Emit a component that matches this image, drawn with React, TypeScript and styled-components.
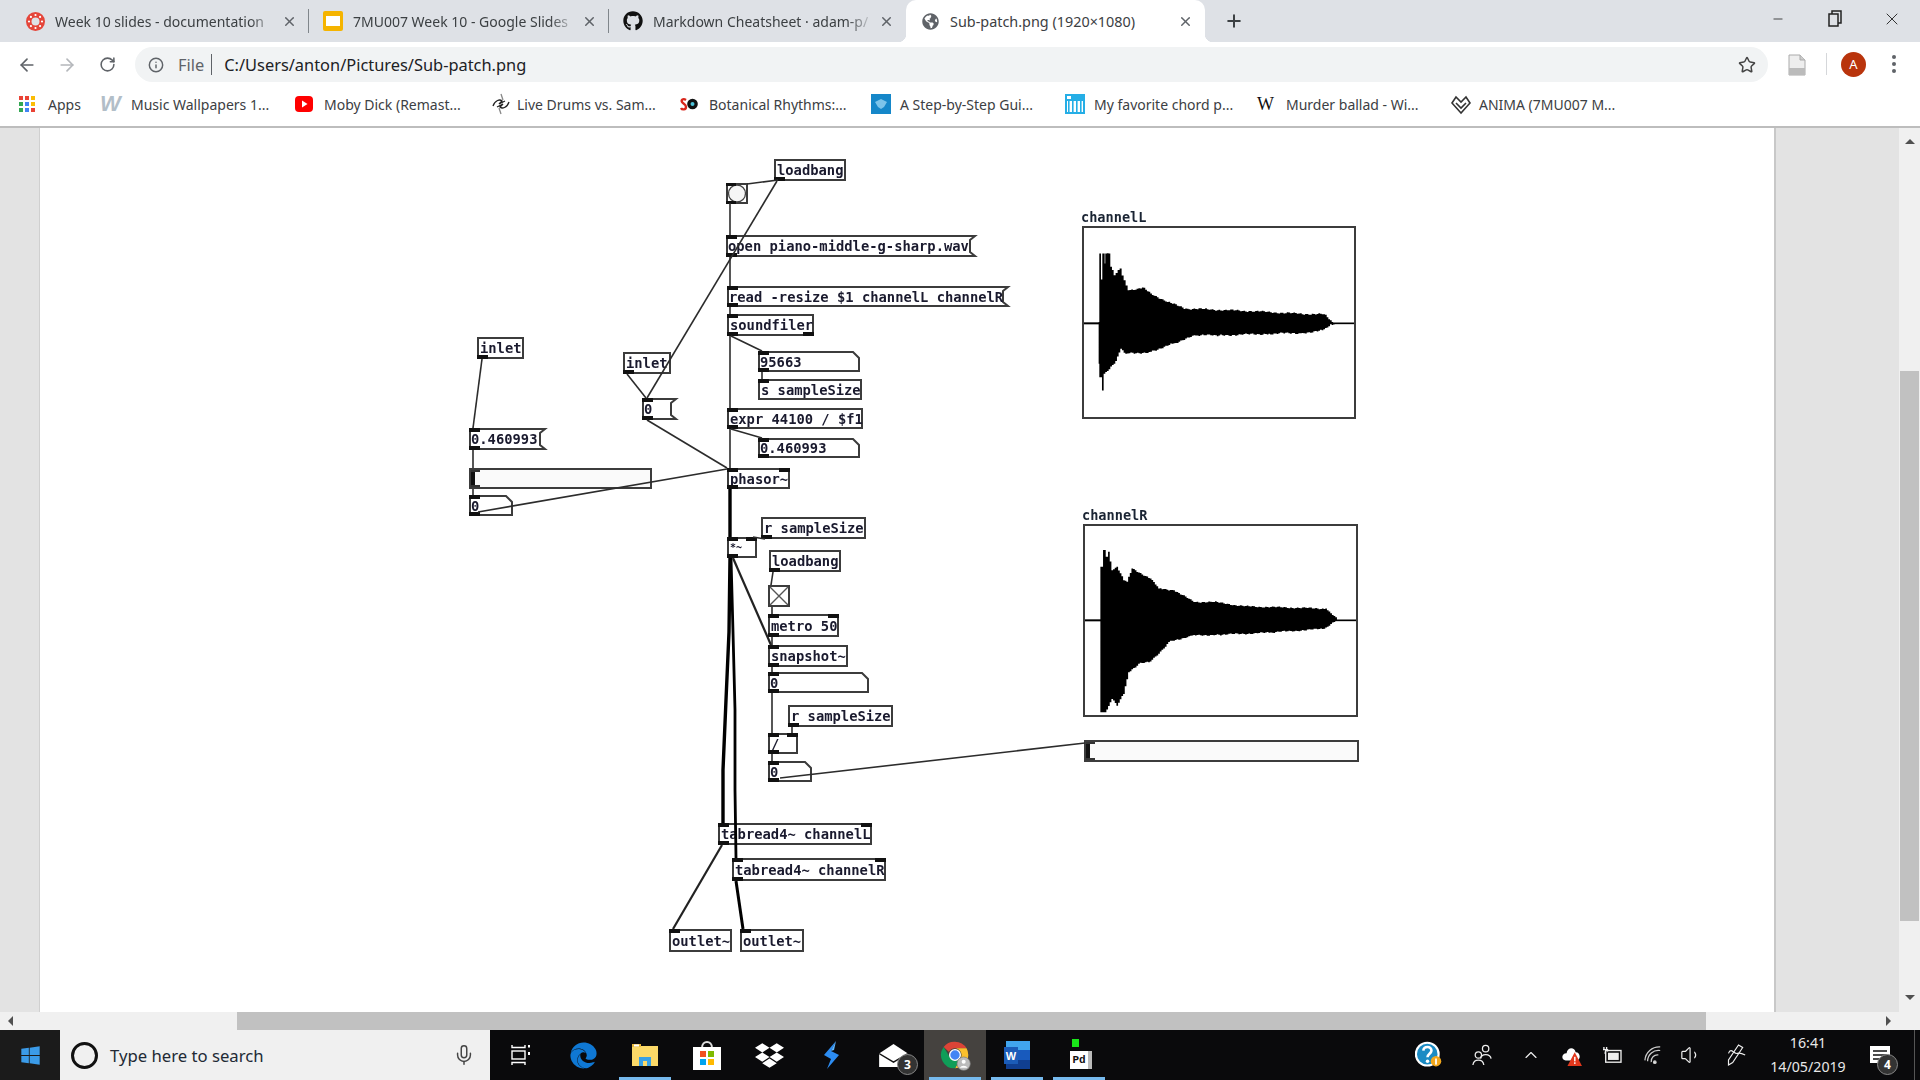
import React from "react";
import styled, { createGlobalStyle } from "styled-components";
import { ArrowLeft, ArrowRight, RotateCw, Info, Star, X, Plus, Minus, Mic, ChevronUp, Volume1 } from "lucide-react";
import { FaGithub, FaGlobeAmericas, FaEdge, FaDropbox, FaWindows } from "react-icons/fa";

const UI = `"Noto Sans", "Open Sans", Arial, sans-serif`;
const MONO = `"DejaVu Sans Mono", "Liberation Mono", monospace`;

const Global = createGlobalStyle`
  html, body { margin: 0; padding: 0; width: 1920px; height: 1080px; overflow: hidden; background: #fff; }
  #root { width: 1920px; height: 1080px; }
  * { box-sizing: border-box; }
  svg { flex: none; }
`;

const Page = styled.div`
  width: 1920px; height: 1080px; display: flex; flex-direction: column; font-family: ${UI}; color: #3c4043;
`;

/* ---------- tab strip ---------- */
const TabStrip = styled.div`
  height: 42px; flex: none; background: #dee1e6; display: flex; padding-left: 11px; align-items: stretch;
`;
const Tab = styled.div<{ $w: number; $active?: boolean; $sep?: boolean }>`
  position: relative; width: ${p => p.$w}px; flex: none; display: flex; align-items: center; gap: 12px;
  padding: 0 12px 0 16px; font-size: ${p => (p.$active ? 14.4 : 14)}px; color: #3c4043;
  background: ${p => (p.$active ? "#fff" : "transparent")};
  border-radius: ${p => (p.$active ? "10px 10px 0 0" : "0")};
  ${p => p.$sep && `&::after { content: ""; position: absolute; right: 0; top: 9px; height: 24px; width: 1px; background: #80868b; }`}
  ${p => p.$active && `
    &::before { content: ""; position: absolute; left: -8px; bottom: 0; width: 8px; height: 8px;
      background: radial-gradient(circle at 0 0, transparent 8px, #fff 8.5px); }
  `}
`;
const TabEnd = styled.span`
  position: absolute; right: -8px; bottom: 0; width: 8px; height: 8px;
  background: radial-gradient(circle at 100% 0, transparent 8px, #fff 8.5px);
`;
const TabIcon = styled.span`
  width: 16px; height: 20px; flex: none; display: flex; align-items: center; justify-content: center;
`;
const TabTitle = styled.span<{ $fade?: boolean }>`
  flex: 1; min-width: 0; white-space: nowrap; overflow: hidden; margin-right: -7px;
  ${p => p.$fade && `mask-image: linear-gradient(to right, #000 88%, transparent 100%);`}
`;
const NewTab = styled.span`
  width: 58px; display: flex; align-items: center; justify-content: center; color: #3c4043;
`;
const WindowControls = styled.div`
  margin-left: auto; display: flex; align-items: flex-start; padding-top: 8px; color: #222;
`;
const WinButton = styled.span`
  width: 57px; height: 22px; display: flex; align-items: center; justify-content: center;
`;

/* ---------- toolbar ---------- */
const Toolbar = styled.div`
  height: 44px; flex: none; background: #fff; display: flex; align-items: center; padding: 0 0 0 7px;
`;
const NavButton = styled.span<{ $off?: boolean; $w?: number }>`
  width: ${p => p.$w ?? 40}px; flex: none; display: flex; justify-content: center; align-items: center; padding-top: 1px;
  color: ${p => (p.$off ? "#b4b7bb" : "#5f6368")};
`;
const Omnibox = styled.div`
  width: 1633px; height: 35px; margin: 1px 0 0 8px; flex: none; background: #f1f3f4; border-radius: 18px;
  display: flex; align-items: center; padding: 0 12px 0 13px; font-size: 16.4px; color: #202124;
`;
const FileChip = styled.span`
  color: #5f6368; margin-left: 14px; padding-right: 7px; border-right: 1px solid #5f6368; line-height: 21px;
`;
const Url = styled.span`
  margin-left: 12px; flex: 1; white-space: nowrap;
`;
const ToolDivider = styled.span`
  width: 1px; height: 22px; background: #d5d7da; flex: none; margin-right: 14px;
`;
const Avatar = styled.span`
  width: 25px; height: 25px; border-radius: 50%; background: #b9340c; color: #fff; flex: none;
  font-size: 13px; display: flex; align-items: center; justify-content: center; margin-right: 26px;
`;
const Kebab = styled.span`
  width: 4px; height: 4px; border-radius: 50%; background: #5f6368; box-shadow: 0 -7px 0 #5f6368, 0 7px 0 #5f6368; flex: none;
`;

/* ---------- bookmarks ---------- */
const Bookmarks = styled.div`
  height: 42px; flex: none; background: #fff; border-bottom: 2px solid #bdbdbd; display: flex; align-items: center;
  padding: 0 0 4px 18px; font-size: 14px; color: #3c4043;
`;
const Bookmark = styled.div<{ $w: number }>`
  width: ${p => p.$w}px; flex: none; display: flex; align-items: center; white-space: nowrap;
`;
const BookmarkIcon = styled.span<{ $slot?: number }>`
  width: ${p => p.$slot ?? 30}px; flex: none; display: flex; align-items: center; padding-left: 1px;
`;
const SerifMark = styled.span`
  font-family: "Liberation Serif", serif; font-size: 18px; color: #111; line-height: 1;
`;
const ItalicMark = styled.span`
  font-family: "Liberation Sans", sans-serif; font-style: italic; font-weight: 700; font-size: 22px; color: #b2bec8; line-height: 1;
`;

/* ---------- viewer ---------- */
const Viewer = styled.div`
  flex: 1; min-height: 0; display: flex; background: #e3e3e3;
`;
const LeftGutter = styled.div`
  width: 40px; flex: none; background: #e3e3e3; border-right: 1px solid #d0d0d0;
`;
const PatchCanvas = styled.div`
  position: relative; width: 1734px; flex: none; background: #fff; overflow: hidden;
`;
const Blurred = styled.div`
  position: absolute; inset: 0; filter: blur(0.45px);
`;
const RightGutter = styled.div`
  flex: 1; background: #e3e3e3; border-left: 2px solid #c8c8c8;
`;
const VTrack = styled.div`
  width: 21px; flex: none; background: #f0f0f0; display: flex; flex-direction: column; align-items: center; padding-top: 11px;
`;
const VThumb = styled.div`
  width: 19px; height: 550px; background: #c1c1c1; margin-top: 227px; flex: none;
`;
const Tri = styled.span<{ $dir: "up" | "down" | "left" | "right" }>`
  width: 0; height: 0; flex: none; border: 5px solid transparent;
  ${p => p.$dir === "up" && `border-bottom: 5px solid #505050; border-top-width: 0;`}
  ${p => p.$dir === "down" && `border-top: 5px solid #505050; border-bottom-width: 0;`}
  ${p => p.$dir === "left" && `border-right: 5px solid #505050; border-left-width: 0;`}
  ${p => p.$dir === "right" && `border-left: 5px solid #505050; border-right-width: 0;`}
`;
const VDown = styled(Tri)`
  margin-top: 74px;
`;
const HTrack = styled.div`
  height: 18px; flex: none; background: #f0f0f0; display: flex; align-items: center; padding-left: 8px;
`;
const HThumb = styled.div`
  width: 1469px; height: 18px; background: #c1c1c1; margin-left: 224px; flex: none;
`;
const HRight = styled(Tri)`
  margin-left: 180px;
`;

/* ---------- pure data patch ---------- */
const OX = 40;
const OY = 128;
type Kind = "obj" | "msg" | "num";
const Node = styled.div<{ $x: number; $y: number; $w: number; $h: number; $kind: Kind }>`
  position: absolute; left: ${p => p.$x - OX}px; top: ${p => p.$y - OY}px; width: ${p => p.$w}px; height: ${p => p.$h}px;
  background: #fff; border: ${p => (p.$kind === "obj" ? "2px solid #3c3c3c" : "none")};
  display: flex; align-items: center; padding-left: ${p => (p.$kind === "obj" ? 1 : 2)}px;
  font-family: ${MONO}; font-weight: 700; font-size: 13.8px; color: #1a1a2e; white-space: nowrap;
`;
const NodeShape = styled.svg`
  position: absolute; left: 0; top: 0; overflow: visible;
`;
const NodeLabel = styled.span<{ $small?: boolean }>`
  position: relative; ${p => p.$small && `font-size: 10px;`}
`;
const Port = styled.span<{ $side: "top" | "bottom"; $right?: boolean; $obj: boolean }>`
  position: absolute; width: 11px; height: 4px; background: #111;
  ${p => p.$side}: ${p => (p.$obj ? -2 : 0)}px;
  ${p => (p.$right ? "right" : "left")}: ${p => (p.$obj ? -2 : 0)}px;
`;
const ArrayName = styled.div<{ $x: number; $y: number }>`
  position: absolute; left: ${p => p.$x - OX}px; top: ${p => p.$y - OY}px;
  font-family: ${MONO}; font-weight: 700; font-size: 13.6px; color: #1a2433; line-height: 14px;
`;
const ArrayBox = styled.div<{ $x: number; $y: number; $w: number; $h: number }>`
  position: absolute; left: ${p => p.$x - OX}px; top: ${p => p.$y - OY}px; width: ${p => p.$w}px; height: ${p => p.$h}px;
  border: 2px solid #3c3c3c; background: #fff;
`;
const Waveform = styled.svg`
  display: block; width: 100%; height: 100%;
`;
const Slider = styled.div<{ $x: number; $y: number; $w: number; $h: number }>`
  position: absolute; left: ${p => p.$x - OX}px; top: ${p => p.$y - OY}px; width: ${p => p.$w}px; height: ${p => p.$h}px;
  border: 2px solid #3c3c3c; background: #fafafa;
`;
const SliderHandle = styled.span`
  position: absolute; left: 0; top: 0; bottom: 0; width: 4px; background: #111;
  &::after { content: ""; position: absolute; left: 0; top: 0; bottom: 0; width: 9px;
    border-top: 2px solid #333; border-bottom: 2px solid #333; }
`;
const Widget = styled.svg<{ $x: number; $y: number }>`
  position: absolute; left: ${p => p.$x - OX}px; top: ${p => p.$y - OY}px;
`;
const WireLayer = styled.svg`
  position: absolute; left: 0; top: 0; width: 1734px; height: 884px; pointer-events: none;
`;

type PdNode = { b: [number, number, number, number]; t: string; k?: Kind; i?: number; o?: number; small?: boolean; flag?: boolean };

const nodes: PdNode[] = [
  { b: [774, 159, 846, 181], t: "loadbang", o: 1 },
  { b: [726, 235, 976, 257], t: "open piano-middle-g-sharp.wav", k: "msg", flag: true, i: 1, o: 1 },
  { b: [727, 286, 1009, 307], t: "read -resize $1 channelL channelR", k: "msg", flag: true, i: 1, o: 1 },
  { b: [727, 314, 814, 336], t: "soundfiler", i: 1, o: 2 },
  { b: [758, 351, 860, 372], t: "95663", k: "num", i: 1, o: 1 },
  { b: [758, 379, 862, 400], t: "s sampleSize", i: 1 },
  { b: [727, 408, 863, 429], t: "expr 44100 / $f1", i: 1, o: 1 },
  { b: [758, 438, 860, 458], t: "0.460993", k: "num", i: 1, o: 1 },
  { b: [727, 468, 790, 489], t: "phasor~", i: 2, o: 1 },
  { b: [477, 337, 524, 359], t: "inlet", o: 1 },
  { b: [623, 352, 671, 374], t: "inlet", o: 1 },
  { b: [642, 398, 677, 420], t: "0", k: "msg", flag: true, i: 1, o: 1 },
  { b: [469, 428, 546, 450], t: "0.460993", k: "msg", flag: true, i: 1, o: 1 },
  { b: [469, 495, 513, 516], t: "0", k: "num", i: 1, o: 1 },
  { b: [761, 517, 866, 539], t: "r sampleSize", o: 1 },
  { b: [727, 537, 757, 558], t: "*~", small: true, i: 2, o: 1 },
  { b: [769, 550, 841, 572], t: "loadbang", o: 1 },
  { b: [768, 614, 839, 637], t: "metro 50", i: 2, o: 1 },
  { b: [768, 645, 848, 667], t: "snapshot~", i: 1, o: 1 },
  { b: [768, 672, 869, 693], t: "0", k: "num", i: 1, o: 1 },
  { b: [788, 705, 893, 727], t: "r sampleSize", o: 1 },
  { b: [768, 733, 798, 754], t: "/", i: 2, o: 1 },
  { b: [768, 761, 812, 782], t: "0", k: "num", i: 1, o: 1 },
  { b: [718, 823, 872, 845], t: "tabread4~ channelL", i: 2, o: 1 },
  { b: [732, 858, 886, 881], t: "tabread4~ channelR", i: 2, o: 1 },
  { b: [669, 929, 732, 952], t: "outlet~", i: 1 },
  { b: [740, 929, 804, 952], t: "outlet~", i: 1 },
];

const thin: [number, number, number, number][] = [
  [778, 180, 747, 184], [777, 181, 647, 398], [730, 203, 730, 235], [730, 257, 730, 286], [730, 307, 730, 314],
  [730, 336, 730, 408], [730, 429, 730, 468], [731, 336, 762, 351], [762, 372, 762, 379], [731, 429, 762, 438],
  [627, 374, 646, 398], [647, 420, 727, 468], [727, 469, 478, 512], [482, 359, 473, 428], [473, 450, 473, 468],
  [473, 489, 473, 495], [765, 539, 753, 537], [773, 572, 771, 585], [772, 607, 772, 614], [772, 637, 772, 645],
  [772, 667, 772, 672], [772, 693, 772, 733], [792, 727, 792, 733], [772, 754, 772, 761], [780, 778, 1085, 743],
];
const medium: [number, number, number, number][] = [
  [733, 558, 771, 645], [722, 845, 673, 929],
];

function jag(pts: number[][], amp: number, seed: number): string {
  const out: string[] = [];
  for (let i = 0; i < pts.length - 1; i++) {
    const [x0, y0] = pts[i];
    const [x1, y1] = pts[i + 1];
    const n = Math.max(1, Math.floor(Math.abs(x1 - x0) / 5));
    for (let k = 0; k < n; k++) {
      const t = k / n;
      const wob = k === 0 ? 0 : (Math.sin((x0 + k * 5) * 12.9 + seed) + Math.sin((x0 + k * 5) * 3.7 + seed)) * amp;
      const x = x0 + (x1 - x0) * t;
      const y = y0 + (y1 - y0) * t + wob;
      out.push(`${x.toFixed(1)},${y.toFixed(1)} ${(x + (x1 - x0) / n).toFixed(1)},${y.toFixed(1)}`);
    }
  }
  const last = pts[pts.length - 1];
  out.push(`${last[0]},${last[1]}`);
  return out.join(" ");
}

const waveL = [
  ...[[85, 365], [87, 160], [92, 160], [92, 238], [96, 160], [103, 190], [105, 160], [115, 160], [120, 200], [130, 225], [148, 205], [160, 240], [172, 270], [215, 262], [240, 280], [290, 305], [345, 325], [410, 327], [470, 330], [535, 332], [680, 340], [760, 342], [785, 365], [800, 368]],
  ...[[800, 371], [785, 372], [760, 390], [700, 398], [600, 400], [450, 405], [380, 405], [310, 430], [240, 455], [170, 460], [155, 445], [135, 490], [105, 520], [100, 570], [95, 530], [87, 490], [85, 372]],
];
const waveR = [
  ...[[92, 358], [92, 200], [100, 150], [108, 170], [115, 155], [125, 210], [140, 200], [160, 240], [170, 245], [185, 205], [240, 235], [265, 265], [310, 270], [370, 305], [430, 305], [520, 318], [660, 322], [765, 325], [800, 358]],
  ...[[800, 362], [765, 385], [600, 397], [450, 403], [370, 405], [300, 425], [270, 460], [240, 485], [210, 490], [180, 515], [165, 580], [145, 615], [130, 595], [110, 635], [98, 635], [92, 550]],
];

const PatchNode: React.FC<{ n: PdNode }> = ({ n }) => {
  const [x0, y0, x1, y1] = n.b;
  const w = x1 - x0;
  const h = y1 - y0;
  const k = n.k ?? "obj";
  const shape = n.flag
    ? `1,1 ${w - 1},1 ${w - 6},5 ${w - 6},${h - 5} ${w - 1},${h - 1} 1,${h - 1}`
    : `1,1 ${w - 7},1 ${w - 1},7 ${w - 1},${h - 1} 1,${h - 1}`;
  const obj = k === "obj";
  return (
    <Node $x={x0} $y={y0} $w={w} $h={h} $kind={k}>
      {!obj && (
        <NodeShape width={w} height={h}>
          <polygon points={shape} fill="#fff" stroke="#3c3c3c" strokeWidth="2" />
        </NodeShape>
      )}
      <NodeLabel $small={n.small}>{n.t}</NodeLabel>
      {(n.i ?? 0) > 0 && <Port $side="top" $obj={obj} />}
      {(n.i ?? 0) > 1 && <Port $side="top" $right $obj={obj} />}
      {(n.o ?? 0) > 0 && <Port $side="bottom" $obj={obj} />}
      {(n.o ?? 0) > 1 && <Port $side="bottom" $right $obj={obj} />}
    </Node>
  );
};

const Patch: React.FC = () => (
  <Blurred>
    <ArrayName $x={1081} $y={210}>channelL</ArrayName>
    <ArrayBox $x={1082} $y={226} $w={274} $h={193}>
      <Waveform viewBox="41 84 811 565" preserveAspectRatio="none">
        <line x1="35" y1="369" x2="90" y2="369" stroke="#000" strokeWidth="6" />
        <line x1="790" y1="369" x2="860" y2="369" stroke="#000" strokeWidth="5" />
        <polygon points={jag(waveL, 1.6, 1)} fill="#000" />
      </Waveform>
    </ArrayBox>
    <ArrayName $x={1082} $y={508}>channelR</ArrayName>
    <ArrayBox $x={1083} $y={524} $w={275} $h={193}>
      <Waveform viewBox="46 78 811 565" preserveAspectRatio="none">
        <line x1="35" y1="360" x2="95" y2="360" stroke="#000" strokeWidth="6" />
        <line x1="795" y1="360" x2="865" y2="360" stroke="#000" strokeWidth="5" />
        <polygon points={jag(waveR, 1.3, 4)} fill="#000" />
      </Waveform>
    </ArrayBox>

    <Slider $x={469} $y={468} $w={183} $h={21}><SliderHandle /></Slider>
    <Slider $x={1084} $y={740} $w={275} $h={22}><SliderHandle /></Slider>

    {nodes.map((n, i) => <PatchNode key={i} n={n} />)}

    <Widget $x={726} $y={183} width="22" height="21" viewBox="0 0 22 21">
      <rect x="1" y="1" width="20" height="19" fill="#fff" stroke="#3c3c3c" strokeWidth="2" />
      <circle cx="11" cy="10.5" r="8.5" fill="#f6f6f6" stroke="#444" strokeWidth="1.3" />
      <rect x="0" y="0" width="10" height="3" fill="#111" />
      <rect x="0" y="18" width="10" height="3" fill="#111" />
    </Widget>
    <Widget $x={768} $y={585} width="22" height="22" viewBox="0 0 22 22">
      <rect x="1" y="1" width="20" height="20" fill="#fff" stroke="#3c3c3c" strokeWidth="2" />
      <path d="M2 2 L20 20 M20 2 L2 20" stroke="#555" strokeWidth="1.4" />
    </Widget>

    <WireLayer viewBox={`${OX} ${OY} 1734 884`}>
      {thin.map((l, i) => (
        <line key={i} x1={l[0]} y1={l[1]} x2={l[2]} y2={l[3]} stroke="#2c2c2c" strokeWidth="1.6" />
      ))}
      {medium.map((l, i) => (
        <line key={i} x1={l[0]} y1={l[1]} x2={l[2]} y2={l[3]} stroke="#222" strokeWidth="2.2" />
      ))}
      <polyline points="730,489 730,537" fill="none" stroke="#000" strokeWidth="3.4" />
      <polyline points="730,558 729,632 726,700 723,770 723,823" fill="none" stroke="#000" strokeWidth="3.4" />
      <polyline points="731,558 733,632 735,710 735,790 736,858" fill="none" stroke="#000" strokeWidth="2.8" />
      <polyline points="736,881 743,929" fill="none" stroke="#000" strokeWidth="3" />
    </WireLayer>
  </Blurred>
);

/* ---------- taskbar ---------- */
const Taskbar = styled.div`
  height: 50px; flex: none; background: #0a0a0c; display: flex; align-items: stretch; color: #fff;
`;
const StartButton = styled.div`
  width: 60px; flex: none; background: #1b1b1b; display: flex; align-items: center; justify-content: center; color: #3b9be8;
`;
const SearchBox = styled.div`
  width: 430px; flex: none; background: #f0f0f0; display: flex; align-items: center; padding-left: 11px;
  font-size: 16.7px; color: #222a35;
`;
const Cortana = styled.span`
  width: 27px; height: 27px; flex: none; border-radius: 50%; border: 3px solid #111; margin-right: 12px;
`;
const SearchText = styled.span`
  flex: 1;
`;
const MicSlot = styled.span`
  width: 50px; flex: none; color: #444; display: flex; justify-content: center; padding-right: 2px;
`;
const TaskCell = styled.div<{ $open?: boolean; $active?: boolean }>`
  position: relative; width: 62px; flex: none; display: flex; align-items: center; justify-content: center;
  background: ${p => (p.$active ? "#45423f" : "transparent")};
  ${p => p.$open && `&::after { content: ""; position: absolute; left: 5px; right: 5px; bottom: 0; height: 3px; background: #76b9ed; }`}
`;
const Badge = styled.span<{ $right: number }>`
  position: absolute; right: ${p => p.$right}px; bottom: 5px; width: 21px; height: 21px; border-radius: 50%; background: #333;
  border: 1.5px solid #888; font-size: 12px; font-weight: 700; color: #fff; display: flex; align-items: center; justify-content: center;
  font-family: ${UI}; line-height: 1;
`;
const Tray = styled.div`
  margin-left: auto; display: flex; align-items: stretch;
`;
const TrayCell = styled.span<{ $w: number }>`
  position: relative; width: ${p => p.$w}px; flex: none; display: flex; align-items: center; justify-content: center; color: #eee;
`;
const Clock = styled.div`
  width: 94px; flex: none; display: flex; flex-direction: column; align-items: center; justify-content: center;
  font-size: 14.2px; line-height: 24px; color: #e8e8e8; text-align: center;
`;
const PeekLine = styled.span`
  width: 1px; flex: none; background: #555; margin: 0 5px 0 9px;
`;
const WordLetter = styled.span`
  position: absolute; left: 18px; top: 17px; width: 14px; height: 17px; background: #1b5cb8; color: #fff;
  font: 700 11px "Liberation Sans", sans-serif; display: flex; align-items: center; justify-content: center;
`;
const PdDoc = styled.span`
  position: absolute; left: 22px; top: 21px; width: 22px; height: 18px; background: #fff; border-right: 4px solid #bbb; color: #111;
  font: 700 11px "Liberation Mono", monospace; display: flex; align-items: center; justify-content: center;
`;
const PdLed = styled.span`
  position: absolute; left: 24px; top: 9px; width: 7px; height: 8px; background: #19e619;
`;

const SlidesIcon = () => (
  <svg width="20" height="20" viewBox="0 0 20 20"><rect x="0" y="0" width="20" height="20" rx="2" fill="#f5b400" /><rect x="3" y="5" width="14" height="10" fill="#fff" /></svg>
);
const CanvasIcon = () => (
  <svg width="21" height="21" viewBox="0 0 21 21" fill="#e5453a">
    <path d="M10.5 1a9.5 9.5 0 1 0 0 19a9.5 9.5 0 0 0 0-19z M10.5 6.5a4 4 0 1 1 0 8a4 4 0 0 1 0-8z" fillRule="evenodd" />
    {[0, 45, 90, 135, 180, 225, 270, 315].map(a => (
      <circle key={a} cx={10.5 + 6.5 * Math.cos(a * Math.PI / 180)} cy={10.5 + 6.5 * Math.sin(a * Math.PI / 180)} r="1.1" fill="#fff" />
    ))}
  </svg>
);
const AppsIcon = () => {
  const c = ["#ea4335", "#ea4335", "#fbbc05", "#34a853", "#4285f4", "#fbbc05", "#34a853", "#4285f4", "#ea4335"];
  return (
    <svg width="16" height="16" viewBox="0 0 16 16">
      {c.map((f, i) => <rect key={i} x={(i % 3) * 6} y={Math.floor(i / 3) * 6} width="4" height="4" fill={f} />)}
    </svg>
  );
};
const YoutubeIcon = () => (
  <svg width="18" height="16" viewBox="0 0 18 16"><rect width="18" height="16" rx="4" fill="#f00" /><path d="M7 4.5 L12.5 8 L7 11.5z" fill="#fff" /></svg>
);
const SwirlIcon = () => (
  <svg width="22" height="22" viewBox="0 0 22 22" fill="none" stroke="#222" strokeWidth="1.3">
    <path d="M3 13 C5 7 10 6 12 8 L9 11 L15 8 M19 9 C17 15 12 16 10 14 L13 11 L7 14" /><path d="M9 15 L11 21 M11 1 L13 7" stroke="#888" />
  </svg>
);
const SoIcon = () => (
  <svg width="18" height="14" viewBox="0 0 18 14">
    <path d="M6 3 C3 1 1 3 2 5 C3 7 6 7 6 10 C6 13 2 13 1 11" stroke="#d8261c" strokeWidth="2.4" fill="none" />
    <circle cx="12.5" cy="7" r="5.3" fill="#111" /><circle cx="12.5" cy="7" r="2" fill="#4cc3d9" />
  </svg>
);
const BlueIcon = () => (
  <svg width="20" height="20" viewBox="0 0 20 20"><rect width="20" height="20" fill="#1587c9" /><path d="M4 8 L10 5 L16 8 L13 13 L10 15 L7 13z" fill="#7cc4ea" /></svg>
);
const ChordIcon = () => (
  <svg width="20" height="20" viewBox="0 0 20 20">
    <rect width="20" height="20" fill="#25aee6" /><rect x="2" y="7" width="16" height="11" fill="#fff" />
    {[4, 8, 12, 16].map(x => <rect key={x} x={x - 1} y="7" width="1.6" height="11" fill="#25aee6" />)}
    <rect x="2" y="2" width="4" height="3" fill="#fff" />
  </svg>
);
const AnimaIcon = () => (
  <svg width="22" height="22" viewBox="0 0 22 22" fill="none" stroke="#333" strokeWidth="1.6">
    <path d="M11 20 L2 10 L6 4 L11 9 L16 4 L20 10z" /><path d="M6 10 L11 15 L16 10" />
  </svg>
);
const PageIcon = () => (
  <svg width="18" height="22" viewBox="0 0 18 22"><path d="M1 1 H12 L17 6 V21 H1z" fill="#eee" stroke="#aaa" /><rect x="1" y="14" width="16" height="7" fill="#bbb" /><path d="M12 1 V6 H17" fill="#ccc" stroke="#aaa" /></svg>
);
const RestoreIcon = () => (
  <svg width="14" height="18" viewBox="0 0 14 18" fill="none" stroke="#222" strokeWidth="1.5"><rect x="1" y="4" width="9" height="12" /><path d="M4 4 V1 H13 V13 H10" /></svg>
);
const ExplorerIcon = () => (
  <svg width="28" height="24" viewBox="0 0 28 24"><path d="M1 1 H9 V3 H27 V23 H1z" fill="#fbd968" /><rect x="1" y="1" width="9" height="3" fill="#e9b83a" /><path d="M8 14 H20 V23 H16 V18 H12 V23 H8z" fill="#37a0e6" /><rect x="3" y="1.5" width="5" height="2" fill="#fff" /></svg>
);
const StoreIcon = () => (
  <svg width="28" height="30" viewBox="0 0 28 30">
    <path d="M9 8 C9 0 19 0 19 8" fill="none" stroke="#ddd" strokeWidth="2" /><rect x="0" y="7" width="28" height="23" fill="#fff" />
    <rect x="7" y="11" width="6" height="6" fill="#f25022" /><rect x="15" y="11" width="6" height="6" fill="#7fba00" /><rect x="7" y="19" width="6" height="6" fill="#00a4ef" /><rect x="15" y="19" width="6" height="6" fill="#ffb900" />
  </svg>
);
const BoltIcon = () => (
  <svg width="18" height="28" viewBox="0 0 18 28"><path d="M14 0 L2 14 L9 18 L5 28 L17 14 L9 10z" fill="#2c8cf2" /><path d="M9 10 L14 0 L12 9z" fill="#5fb7ff" /></svg>
);
const MailIcon = () => (
  <svg width="29" height="23" viewBox="0 0 30 24"><path d="M15 0 L30 10 V24 H0 V10z" fill="#fff" /><path d="M0 10 L15 19 L30 10" fill="none" stroke="#111" strokeWidth="1.5" /></svg>
);
const ChromeIcon = () => (
  <svg width="32" height="32" viewBox="0 0 48 48">
    <path d="M24 4 A20 20 0 0 1 41.3 14 H24 A10 10 0 0 0 15 19.5 L7 12 A20 20 0 0 1 24 4z" fill="#db4437" />
    <path d="M41.3 14 A20 20 0 0 1 24 44 L33 28 A10 10 0 0 0 24 14z" fill="#fbc02d" />
    <path d="M7 12 L16 27 A10 10 0 0 0 33 28 L24 44 A20 20 0 0 1 7 12z" fill="#0f9d58" />
    <circle cx="24" cy="24" r="8" fill="#4285f4" stroke="#fff" strokeWidth="2" />
    <circle cx="37" cy="37" r="10" fill="#bbb" stroke="#777" /><circle cx="37" cy="34" r="3" fill="#fff" /><path d="M31 43 A7 6 0 0 1 43 43" fill="#fff" />
  </svg>
);
const WordIcon = () => (
  <svg width="26" height="28" viewBox="0 0 26 28"><rect x="2" y="0" width="24" height="28" rx="1" fill="#2b7cd3" /><rect x="2" y="9" width="24" height="10" fill="#185abd" /><rect x="2" y="19" width="24" height="9" fill="#103f91" /><rect x="2" y="0" width="24" height="9" fill="#41a5ee" /></svg>
);
const HelpIcon = () => (
  <svg width="28" height="28" viewBox="0 0 32 32">
    <circle cx="14" cy="15" r="13" fill="#1a8bc4" stroke="#fff" strokeWidth="2.5" />
    <path d="M9.5 11 C10 5.5 19 5.5 18.8 11 C18.6 14.5 14.3 14.5 14.3 18.5" fill="none" stroke="#fff" strokeWidth="3" /><circle cx="14.3" cy="23" r="2" fill="#fff" />
    <circle cx="24" cy="23" r="6" fill="#f2a71b" /><rect x="23" y="20" width="2" height="7" fill="#fff" />
  </svg>
);
const PeopleIcon = () => (
  <svg width="20" height="22" viewBox="0 0 22 24" fill="none" stroke="#eee" strokeWidth="1.4">
    <circle cx="15" cy="5" r="3.5" /><path d="M9.5 16 C10 10 20 10 21 16" /><circle cx="7" cy="12" r="3.5" /><path d="M1 23 C2 16 12 16 13 23" />
  </svg>
);
const CloudIcon = () => (
  <svg width="20" height="22" viewBox="0 0 22 24">
    <path d="M4 18 C-1 18 -1 10 5 10 C6 3 14 3 15 9 C20 9 21 16 17 18z" fill="#fff" />
    <path d="M14 9 L22 24 H6z" fill="#e2371c" /><rect x="13.3" y="14" width="1.6" height="5" fill="#fff" /><rect x="13.3" y="20" width="1.6" height="1.8" fill="#fff" />
  </svg>
);
const BatteryIcon = () => (
  <svg width="20" height="18" viewBox="0 0 22 20" fill="none" stroke="#eee" strokeWidth="1.5">
    <rect x="4" y="5" width="17" height="13" /><rect x="6.5" y="7.5" width="12" height="8" fill="#eee" stroke="none" /><path d="M2 1 V4 M5 1 V4 M1 4 H6 V6 M3.5 6 V9" />
  </svg>
);
const WifiIcon = () => (
  <svg width="18" height="20" viewBox="0 0 20 22" fill="none" stroke="#ccc" strokeWidth="1.4">
    <path d="M1 17 A16 16 0 0 1 18 2" /><path d="M4 18 A12 12 0 0 1 18 6" /><path d="M8 19 A7 7 0 0 1 16 11" /><circle cx="12" cy="19" r="1.4" fill="#eee" />
  </svg>
);
const PenIcon = () => (
  <svg width="20" height="24" viewBox="0 0 24 28" fill="none" stroke="#eee" strokeWidth="1.4">
    <path d="M15 2 L20 5 L8 23 L3 26 L3 20z" /><path d="M3 12 C6 4 10 14 14 12 C17 11 19 12 23 14" />
  </svg>
);
const NotifIcon = () => (
  <svg width="20" height="24" viewBox="0 0 20 24"><path d="M0 3 H20 V20 H0z" fill="#fff" /><path d="M3 8 H17 M3 12 H17 M3 16 H12" stroke="#111" strokeWidth="1.5" /></svg>
);
const TaskViewIcon = () => (
  <svg width="20" height="20" viewBox="0 0 20 20" fill="none" stroke="#fff" strokeWidth="1.4">
    <path d="M1 0 V2.5 H14 V0" /><rect x="1" y="6" width="13" height="8" /><path d="M1 20 V17.5 H14 V20" /><rect x="17" y="0" width="2" height="2.5" fill="#fff" stroke="none" /><rect x="17" y="7" width="2" height="3" fill="#fff" stroke="none" />
  </svg>
);

const bookmarks: { w: number; slot?: number; icon: React.ReactNode; t: string }[] = [
  { w: 81, icon: <AppsIcon />, t: "Apps" },
  { w: 195, slot: 32, icon: <ItalicMark>W</ItalicMark>, t: "Music Wallpapers 1..." },
  { w: 195, icon: <YoutubeIcon />, t: "Moby Dick (Remast..." },
  { w: 190, slot: 28, icon: <SwirlIcon />, t: "Live Drums vs. Sam..." },
  { w: 191, icon: <SoIcon />, t: "Botanical Rhythms:..." },
  { w: 194, icon: <BlueIcon />, t: "A Step-by-Step Gui..." },
  { w: 192, icon: <ChordIcon />, t: "My favorite chord p..." },
  { w: 193, icon: <SerifMark>W</SerifMark>, t: "Murder ballad - Wi..." },
  { w: 190, icon: <AnimaIcon />, t: "ANIMA (7MU007 M..." },
];

export default function App() {
  return (
    <Page>
      <Global />
      <TabStrip>
        <Tab $w={298} $sep>
          <TabIcon><CanvasIcon /></TabIcon>
          <TabTitle $fade>Week 10 slides - documentation</TabTitle>
          <X size={15} strokeWidth={2.4} color="#5f6368" />
        </Tab>
        <Tab $w={300} $sep>
          <TabIcon><SlidesIcon /></TabIcon>
          <TabTitle $fade>7MU007 Week 10 - Google Slides</TabTitle>
          <X size={15} strokeWidth={2.4} color="#5f6368" />
        </Tab>
        <Tab $w={297}>
          <TabIcon><FaGithub size={20} color="#111" /></TabIcon>
          <TabTitle $fade>Markdown Cheatsheet · adam-p/</TabTitle>
          <X size={15} strokeWidth={2.4} color="#5f6368" />
        </Tab>
        <Tab $w={299} $active>
          <TabIcon><FaGlobeAmericas size={17} color="#5f6368" /></TabIcon>
          <TabTitle>Sub-patch.png (1920×1080)</TabTitle>
          <X size={15} strokeWidth={2.4} color="#5f6368" />
          <TabEnd />
        </Tab>
        <NewTab><Plus size={20} strokeWidth={2.4} /></NewTab>
        <WindowControls>
          <WinButton><Minus size={14} strokeWidth={1.4} /></WinButton>
          <WinButton><RestoreIcon /></WinButton>
          <WinButton><X size={20} strokeWidth={1.1} /></WinButton>
        </WindowControls>
      </TabStrip>

      <Toolbar>
        <NavButton><ArrowLeft size={20} strokeWidth={2} /></NavButton>
        <NavButton $off><ArrowRight size={20} strokeWidth={2} /></NavButton>
        <NavButton><RotateCw size={17} strokeWidth={2.2} /></NavButton>
        <Omnibox>
          <Info size={16} strokeWidth={2.2} color="#5f6368" />
          <FileChip>File</FileChip>
          <Url>C:/Users/anton/Pictures/Sub-patch.png</Url>
          <Star size={18} strokeWidth={2} color="#444" />
        </Omnibox>
        <NavButton $w={58}><PageIcon /></NavButton>
        <ToolDivider />
        <Avatar>A</Avatar>
        <Kebab />
      </Toolbar>

      <Bookmarks>
        {bookmarks.map(b => (
          <Bookmark key={b.t} $w={b.w}>
            <BookmarkIcon $slot={b.slot}>{b.icon}</BookmarkIcon>
            {b.t}
          </Bookmark>
        ))}
      </Bookmarks>

      <Viewer>
        <LeftGutter />
        <PatchCanvas><Patch /></PatchCanvas>
        <RightGutter />
        <VTrack>
          <Tri $dir="up" />
          <VThumb />
          <VDown $dir="down" />
        </VTrack>
      </Viewer>
      <HTrack>
        <Tri $dir="left" />
        <HThumb />
        <HRight $dir="right" />
      </HTrack>

      <Taskbar>
        <StartButton><FaWindows size={21} /></StartButton>
        <SearchBox>
          <Cortana />
          <SearchText>Type here to search</SearchText>
          <MicSlot><Mic size={22} strokeWidth={1.6} /></MicSlot>
        </SearchBox>
        <TaskCell><TaskViewIcon /></TaskCell>
        <TaskCell><FaEdge size={27} color="#0f78d4" /></TaskCell>
        <TaskCell $open><ExplorerIcon /></TaskCell>
        <TaskCell><StoreIcon /></TaskCell>
        <TaskCell><FaDropbox size={29} color="#fff" /></TaskCell>
        <TaskCell><BoltIcon /></TaskCell>
        <TaskCell><MailIcon /><Badge $right={6}>3</Badge></TaskCell>
        <TaskCell $open $active><ChromeIcon /></TaskCell>
        <TaskCell $open><WordIcon /><WordLetter>W</WordLetter></TaskCell>
        <TaskCell $open><PdLed /><PdDoc>Pd</PdDoc></TaskCell>
        <Tray>
          <TrayCell $w={56}><HelpIcon /></TrayCell>
          <TrayCell $w={50}><PeopleIcon /></TrayCell>
          <TrayCell $w={48}><ChevronUp size={20} strokeWidth={1.4} /></TrayCell>
          <TrayCell $w={34}><CloudIcon /></TrayCell>
          <TrayCell $w={46}><BatteryIcon /></TrayCell>
          <TrayCell $w={36}><WifiIcon /></TrayCell>
          <TrayCell $w={40}><Volume1 size={22} strokeWidth={1.3} /></TrayCell>
          <TrayCell $w={50}><PenIcon /></TrayCell>
          <Clock><span>16:41</span><span>14/05/2019</span></Clock>
          <TrayCell $w={50}><NotifIcon /><Badge $right={7}>4</Badge></TrayCell>
          <PeekLine />
        </Tray>
      </Taskbar>
    </Page>
  );
}
